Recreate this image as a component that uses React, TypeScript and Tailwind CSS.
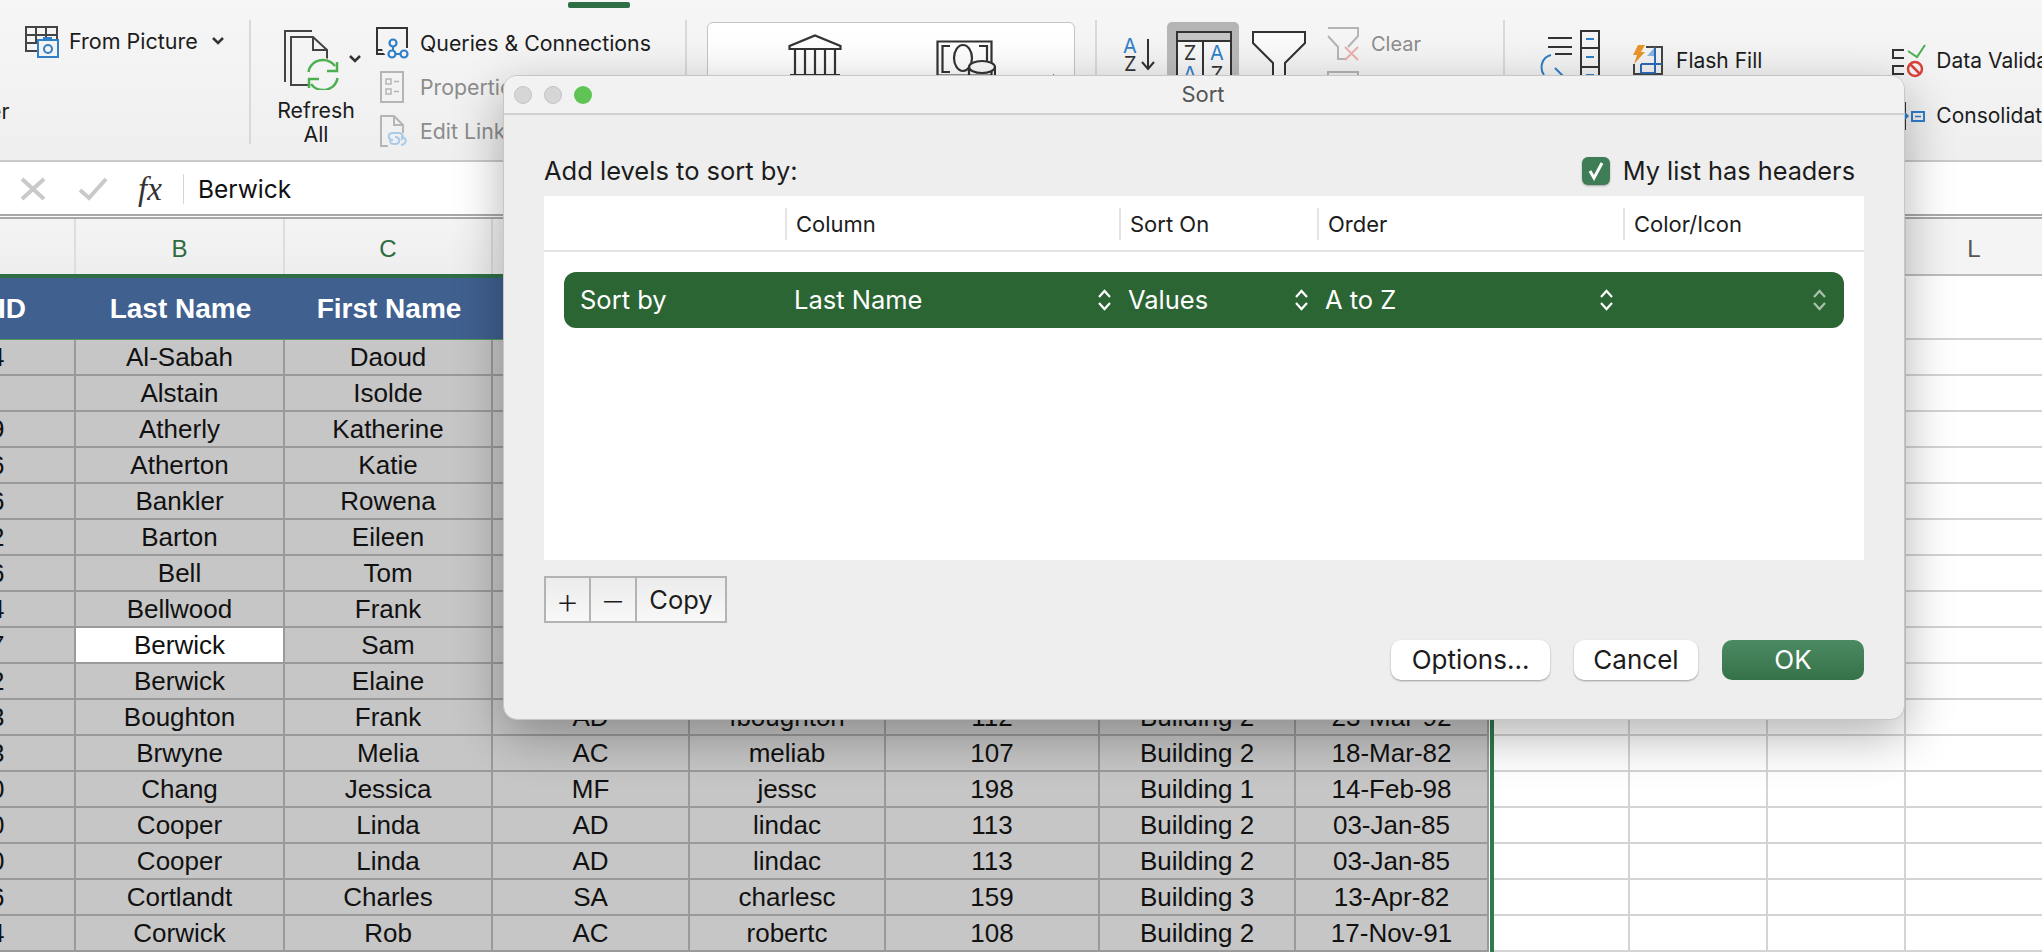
import React from 'react';

const rows: string[][] = [
  ['4', 'Al-Sabah', 'Daoud'],
  ['', 'Alstain', 'Isolde'],
  ['9', 'Atherly', 'Katherine'],
  ['6', 'Atherton', 'Katie'],
  ['6', 'Bankler', 'Rowena'],
  ['2', 'Barton', 'Eileen'],
  ['6', 'Bell', 'Tom'],
  ['4', 'Bellwood', 'Frank'],
  ['7', 'Berwick', 'Sam'],
  ['2', 'Berwick', 'Elaine'],
  ['3', 'Boughton', 'Frank', 'AD', 'fboughton', '112', 'Building 2', '23-Mar-92'],
  ['3', 'Brwyne', 'Melia', 'AC', 'meliab', '107', 'Building 2', '18-Mar-82'],
  ['0', 'Chang', 'Jessica', 'MF', 'jessc', '198', 'Building 1', '14-Feb-98'],
  ['0', 'Cooper', 'Linda', 'AD', 'lindac', '113', 'Building 2', '03-Jan-85'],
  ['0', 'Cooper', 'Linda', 'AD', 'lindac', '113', 'Building 2', '03-Jan-85'],
  ['6', 'Cortlandt', 'Charles', 'SA', 'charlesc', '159', 'Building 3', '13-Apr-82'],
  ['4', 'Corwick', 'Rob', 'AC', 'robertc', '108', 'Building 2', '17-Nov-91'],
];

function UpDown({ dim }: { dim?: boolean }) {
  return (
    <svg width="15" height="22" viewBox="0 0 15 22" fill="none" stroke={dim ? '#a9c2ae' : '#ffffff'} strokeWidth="2.2">
      <path d="M2 8l5.500-6 5.500 6M2 14l5.500 6 5.500-6" />
    </svg>
  );
}

function Chevron() {
  return (
    <svg width="14" height="10" viewBox="0 0 14 10" fill="none" stroke="#333" strokeWidth="2.500">
      <path d="M2 2l5 5 5-5" />
    </svg>
  );
}

function FromPictureIcon() {
  return (
    <svg width="34" height="32" viewBox="0 0 34 32" fill="none" className="shrink-0">
      <path d="M12 25H1V1h31v14M1 9h31M1 17h14M11 1v16M21 1v10" stroke="#444" strokeWidth="2" />
      <rect x="13" y="14" width="20" height="17" fill="#f3f3f3" stroke="#2f7fc9" strokeWidth="2" />
      <rect x="18" y="11" width="9" height="4" fill="#2f7fc9" />
      <circle cx="23" cy="23" r="4" stroke="#2f7fc9" strokeWidth="2" />
    </svg>
  );
}

function RefreshIcon() {
  return (
    <svg width="56" height="60" viewBox="0 0 56 60" fill="none" className="shrink-0">
      <path d="M28 1H1v51" stroke="#444" strokeWidth="2" />
      <path d="M24 55H7V7h22l14 13v10M29 7v13h14" stroke="#444" strokeWidth="2" />
      <circle cx="39" cy="45" r="17" fill="#f4f4f4" />
      <path d="M24.500 42c1-7 7-12 14.500-12 5 0 9 2 12 6M53.500 48c-1 7-7 12-14.500 12-5 0-9-2-12-6" stroke="#4caf50" strokeWidth="2.500" />
      <path d="M53 32v9h-10M25 58v-9h10" stroke="#4caf50" strokeWidth="2.500" />
    </svg>
  );
}

function QueriesIcon() {
  return (
    <svg width="33" height="32" viewBox="0 0 33 32" fill="none">
      <path d="M10 27H1V1h30v20" stroke="#333" strokeWidth="2" />
      <path d="M2 23h7" stroke="#333" strokeWidth="2" />
      <circle cx="17" cy="20" r="11" fill="#f4f4f4" />
      <path d="M17 18v8M17 27h11" stroke="#2f7fc9" strokeWidth="2" />
      <circle cx="17" cy="16" r="3.500" stroke="#2f7fc9" strokeWidth="2.200" fill="#f4f4f4" />
      <circle cx="16" cy="27" r="3.500" stroke="#2f7fc9" strokeWidth="2.200" fill="#f4f4f4" />
      <circle cx="28" cy="27" r="3.500" stroke="#2f7fc9" strokeWidth="2.200" fill="#f4f4f4" />
    </svg>
  );
}

function PropertiesIcon() {
  return (
    <svg width="24" height="32" viewBox="0 0 24 32" fill="none" stroke="#b5b5b5" strokeWidth="2">
      <rect x="1" y="1" width="22" height="30" />
      <path d="M6 8h5v5H6zM6 18h5v5H6zM14 10.500h5M14 20.500h5" strokeWidth="1.500" />
    </svg>
  );
}

function EditLinksIcon() {
  return (
    <svg width="28" height="33" viewBox="0 0 28 33" fill="none">
      <path d="M8 31H1V1h13l9 9v8M14 1v9h9" stroke="#b5b5b5" strokeWidth="2" />
      <path d="M13 25c-5 0-6-6-1-7h7c4 0 5 5 2 7M15 22c5 0 6 6 1 7h-2c-4 0-5-3-3-5M21 22c4 0 6 3 4 6-1 1-2 2-4 2" stroke="#a8cbe8" strokeWidth="2" />
    </svg>
  );
}

function BankIcon() {
  return (
    <svg width="54" height="42" viewBox="0 0 54 42" fill="none" stroke="#333" strokeWidth="2.200">
      <path d="M7 15v26M17 15v26M27 15v26M37 15v26M47 15v26" />
      <path d="M1.500 12v3h51v-3L27 1.500z" />
      <path d="M2 41h50" />
    </svg>
  );
}

function CurrencyIcon() {
  return (
    <svg width="60" height="42" viewBox="0 0 60 42" fill="none" stroke="#333" strokeWidth="2.200">
      <path d="M1.500 1.500h54v34H1.500z" />
      <path d="M14 6H6.500v26H14M43 6h8v20" />
      <ellipse cx="27" cy="18" rx="9" ry="13" />
      <ellipse cx="46" cy="27" rx="13" ry="6" fill="#fafafa" />
      <path d="M33 27v15M59 27v15M33 36c2 3 7 4 13 4s11-1 13-4" fill="#fafafa" />
    </svg>
  );
}

function AzIcon() {
  return (
    <svg width="34" height="34" viewBox="0 0 34 34" fill="none">
      <text x="0" y="15" fontSize="20" fontFamily="Inter, sans-serif" fill="#2f7fc9">A</text>
      <text x="1" y="33" fontSize="20" fontFamily="Inter, sans-serif" fill="#333">Z</text>
      <path d="M25 1v30M19 24l6 7 6-7" stroke="#333" strokeWidth="2" />
    </svg>
  );
}

function SortBoxIcon() {
  return (
    <svg width="56" height="60" viewBox="0 0 56 60" fill="none">
      <rect x="1" y="1" width="54" height="58" fill="#f6f6f6" stroke="#333" strokeWidth="2" />
      <rect x="2" y="2" width="52" height="8" fill="#c4c4c4" />
      <path d="M1 10h54M27 10v50" stroke="#333" strokeWidth="2" />
      <text x="14" y="29" textAnchor="middle" fontSize="20" fontFamily="Inter, sans-serif" fill="#333">Z</text>
      <text x="14" y="50" textAnchor="middle" fontSize="20" fontFamily="Inter, sans-serif" fill="#2f7fc9">A</text>
      <text x="41" y="29" textAnchor="middle" fontSize="20" fontFamily="Inter, sans-serif" fill="#2f7fc9">A</text>
      <text x="41" y="50" textAnchor="middle" fontSize="20" fontFamily="Inter, sans-serif" fill="#333">Z</text>
    </svg>
  );
}

function FunnelIcon() {
  return (
    <svg width="54" height="60" viewBox="0 0 54 60" fill="none">
      <path d="M1 1h52v11L33 32v28H21V32L1 12z" fill="#fafafa" stroke="#333" strokeWidth="2" />
    </svg>
  );
}

function ClearIcon() {
  return (
    <svg width="34" height="34" viewBox="0 0 34 34" fill="none">
      <path d="M1 1h30v8L21 20M1 9l10 11v12h8" stroke="#b5b5b5" strokeWidth="2" />
      <path d="M18 20l13 13M31 20L18 33" stroke="#eab0ac" strokeWidth="2" />
    </svg>
  );
}

function TextColumnsIcon() {
  return (
    <svg width="60" height="46" viewBox="0 0 60 46" fill="none">
      <path d="M8 8h24M8 17h24M15 24h17" stroke="#333" strokeWidth="2" />
      <path d="M11 25C2 27-1 38 4 45M15 38l8 8" stroke="#2f7fc9" strokeWidth="2" />
      <rect x="41" y="1" width="18" height="50" stroke="#333" strokeWidth="2" />
      <path d="M41 18h18M41 37h18" stroke="#333" strokeWidth="2" />
      <path d="M46 9h8M46 27h8M46 45h8" stroke="#2f7fc9" strokeWidth="2" />
    </svg>
  );
}

function FlashFillIcon() {
  return (
    <svg width="32" height="30" viewBox="0 0 32 30" fill="none" className="shrink-0 -mt-[2px]">
      <path d="M14 2h16v27H2V19" stroke="#444" strokeWidth="2" />
      <path d="M15 11L23 2v9z" fill="#8ab6e4" />
      <path d="M9 19h21M9 28h14M9 19v9M23 3v25" stroke="#2d6bb5" strokeWidth="2" />
      <path d="M6 0h7L9 7h4L2 19l3-9H1z" fill="#e8952b" />
    </svg>
  );
}

function DataValidationIcon() {
  return (
    <svg width="34" height="34" viewBox="0 0 34 34" fill="none" className="shrink-0">
      <path d="M12 6H1v8h11M12 22H1v8h11" stroke="#333" strokeWidth="2" />
      <path d="M16 7l9 6 8-12" stroke="#4caf50" strokeWidth="2" />
      <circle cx="23" cy="25" r="7" fill="#f4f4f4" stroke="#d9423b" strokeWidth="2.500" />
      <path d="M18 20l10 10" stroke="#d9423b" strokeWidth="2.500" />
    </svg>
  );
}

function ConsolidateIcon() {
  return (
    <svg width="30" height="30" viewBox="0 0 30 30" fill="none" className="shrink-0">
      <path d="M6 2h4v26H6" stroke="#333" strokeWidth="2" />
      <path d="M9 10l5 5-5 5z" fill="#2f7fc9" />
      <rect x="17" y="11" width="12" height="9" stroke="#2f7fc9" strokeWidth="2" />
      <path d="M20 15.500h6" stroke="#2f7fc9" strokeWidth="1.500" />
    </svg>
  );
}

function Divider({ className }: { className?: string }) {
  return <div className={`w-[2px] shrink-0 mt-[20px] bg-[#d9d9d9] ${className ?? 'h-[124px]'}`} />;
}

function Ribbon() {
  return (
    <div className="flex h-[162px] shrink-0 overflow-hidden border-b-2 border-[#c9c9c9] bg-gradient-to-b from-[#f6f6f6] to-[#efefef] text-[21.3px] leading-[24px] text-[#1c1c1c] whitespace-nowrap font-['Inter',sans-serif]">
      {/* Get data group */}
      <div className="w-[249px] shrink-0 pl-[25px] pt-[26px]">
        <div className="flex items-center">
          <FromPictureIcon />
          <span className="ml-[10px] -mt-[2px] text-[21.5px]">From Picture</span>
          <span className="ml-[13px] -mt-[2px]"><Chevron /></span>
        </div>
        <div className="-ml-[36px] mt-[41px]">er</div>
      </div>
      <Divider />

      {/* Queries group */}
      <div className="flex w-[434px] shrink-0 pl-[33px]">
        <div className="w-[92px] shrink-0 pt-[30px]">
          <div className="flex items-center">
            <RefreshIcon />
            <span className="ml-[8px] -mt-[2px]"><Chevron /></span>
          </div>
          <div className="-ml-[10px] mt-[8px] w-[84px] text-center">
            <div>Refresh</div>
            <div>All</div>
          </div>
        </div>
        <div className="pt-[21px]">
          <div className="flex h-[44px] items-center">
            <div className="w-[44px]"><QueriesIcon /></div>
            <span>Queries &amp; Connections</span>
          </div>
          <div className="flex h-[44px] items-center text-[#8c8c8c]">
            <div className="w-[44px] pl-[4px]"><PropertiesIcon /></div>
            <span className="-mt-[1px]">Properties</span>
          </div>
          <div className="flex h-[44px] items-center text-[#8c8c8c]">
            <div className="w-[44px] pl-[4px]"><EditLinksIcon /></div>
            <span>Edit Links</span>
          </div>
        </div>
      </div>
      <Divider />

      {/* Data types group */}
      <div className="w-[408px] shrink-0 pl-[20px] pt-[22px]">
        <div className="flex h-[110px] w-[368px] rounded-[6px] border border-[#c4c4c4] bg-gradient-to-b from-white to-[#fafafa] pl-[80px] pt-[11px]">
          <BankIcon />
          <div className="ml-[94px] mt-[6px]"><CurrencyIcon /></div>
          <div className="ml-[57px] mt-[40px] h-0 w-0 border-y-[4px] border-l-[6px] border-y-transparent border-l-[#333]" />
        </div>
      </div>
      <Divider />

      {/* Sort group */}
      <div className="flex w-[406px] shrink-0 items-start pl-[26px] pt-[22px]">
        <div className="mt-[16px]"><AzIcon /></div>
        <div className="ml-[10px] h-[70px] w-[72px] rounded-[5px] bg-gradient-to-b from-[#b4b4b4] to-[#c0c0c0] pl-[9px] pt-[9px]"><SortBoxIcon /></div>
        <div className="ml-[13px] mt-[9px]"><FunnelIcon /></div>
        <div className="ml-[21px] mt-[5px]">
          <div className="flex items-center text-[20px] text-[#8c8c8c]">
            <ClearIcon />
            <span className="ml-[10px]">Clear</span>
          </div>
          <div className="mt-[10px] h-[20px] w-[32px] border-2 border-[#b5b5b5]" />
        </div>
      </div>
      <Divider />

      {/* Data tools group */}
      <div className="flex pl-[35px] pt-[30px]">
        <TextColumnsIcon />
        <div className="ml-[32px] mt-[15px] flex h-[32px] items-center">
          <FlashFillIcon />
          <span className="ml-[12px] text-[21px]">Flash Fill</span>
        </div>
        <div className="ml-[130px] mt-[15px]">
          <div className="flex h-[32px] items-center">
            <DataValidationIcon />
            <span className="ml-[10px] text-[21px]">Data Validation</span>
          </div>
          <div className="mt-[23px] flex h-[32px] items-center pl-[3px]">
            <ConsolidateIcon />
            <span className="ml-[11px] text-[21px]">Consolidate</span>
          </div>
        </div>
      </div>
    </div>
  );
}

function FormulaBar() {
  return (
    <div className="flex h-[57px] shrink-0 items-start border-b-[5px] border-double border-[#a9a9a9] bg-white pt-[12px]">
      <svg width="26" height="24" viewBox="0 0 26 24" className="ml-[20px] mt-[3px] shrink-0" fill="none" stroke="#c9c9c9" strokeWidth="4">
        <path d="M2 2l22 20M24 2L2 22" />
      </svg>
      <svg width="30" height="24" viewBox="0 0 30 24" className="ml-[32px] mt-[3px] shrink-0" fill="none" stroke="#c9c9c9" strokeWidth="4">
        <path d="M2 13l9 8L28 2" />
      </svg>
      <span className="ml-[30px] w-[45px] font-['Liberation_Serif',serif] text-[33px] italic leading-[30px] text-[#333]">fx</span>
      <div className="h-[30px] w-[1px] bg-[#d5d5d5]" />
      <span className="ml-[14px] font-['Inter',sans-serif] text-[24.5px] leading-[30px] text-[#111]">Berwick</span>
    </div>
  );
}

const cellWidths = ['w-[76px]', 'w-[209px]', 'w-[208px]', 'w-[197px]', 'w-[196px]', 'w-[214px]', 'w-[196px]', 'w-[193px]'];
const blankWidths = ['w-[136px]', 'w-[138px]', 'w-[138px]', 'w-[138px]'];

function DataSheet() {
  return (
    <div className="flex min-h-0 flex-1 overflow-hidden font-['Liberation_Sans',Arial,sans-serif]">
      {/* Selected range */}
      <div className="w-[1494px] shrink-0">
        <div className="flex h-[55px] bg-gradient-to-b from-[#f4f4f4] to-[#eeeeee] text-[24px] text-[#2e6b3e]">
          {['', 'B', 'C'].map((c, i) => (
            <div key={i} className={`${cellWidths[i]} flex items-center justify-center border-r-2 border-[#dddddd] pt-[5px]`}>{c}</div>
          ))}
        </div>
        <div className="h-[4px] bg-[#2f6f46]" />
        <div className="border-r-4 border-[#2f7a4f] pr-[1px] bg-white">
          <div className="flex h-[61px] bg-[#40608f] text-[28px] font-bold text-white">
            <div className={`${cellWidths[0]} flex items-center overflow-hidden`}><span className="-ml-[2px]">ID</span></div>
            <div className={`${cellWidths[1]} flex items-center justify-center`}>Last Name</div>
            <div className={`${cellWidths[2]} flex items-center justify-center`}>First Name</div>
          </div>
          <div className="h-[1px] bg-[#4f9a5c]" />
          {rows.map((row, r) => (
            <div key={r} className="flex h-[36px] bg-[#c6c6c6] text-[26px] leading-[34px] text-[#111]">
              {cellWidths.map((w, c) => {
                const active = r === 8 && c === 1;
                return (
                  <div
                    key={c}
                    className={`${w} h-[36px] shrink-0 overflow-hidden whitespace-nowrap border-b-2 border-r-2 border-[#9a9a9a] ${c === 0 ? 'text-left' : 'text-center'} ${active ? 'bg-white' : ''}`}
                  >
                    {c === 0 ? <span className="-ml-[10px] inline-block">{row[0]}</span> : row[c]}
                  </div>
                );
              })}
            </div>
          ))}
        </div>
      </div>

      {/* Empty cells on the right */}
      <div className="flex-1">
        <div className="flex h-[57px] border-b-2 border-[#bdbdbd] bg-[#f4f4f4] text-[24px] text-[#555]">
          {['', '', '', 'L'].map((c, i) => (
            <div key={i} className={`${blankWidths[i]} flex shrink-0 items-center justify-center border-r-2 border-[#dddddd] pt-[5px]`}>{c}</div>
          ))}
        </div>
        <div className="flex h-[64px] bg-white pt-[2px]">
          {blankWidths.map((w, c) => (
            <div key={c} className={`${w} shrink-0 border-b-2 border-r-2 border-[#d4d4d4]`} />
          ))}
        </div>
        {rows.map((_, r) => (
          <div key={r} className="flex h-[36px] bg-white">
            {blankWidths.map((w, c) => (
              <div key={c} className={`${w} shrink-0 border-b-2 border-r-2 border-[#d4d4d4]`} />
            ))}
          </div>
        ))}
      </div>
    </div>
  );
}

function SortDialog() {
  return (
    <div className="absolute left-[503px] top-[75px] h-[645px] w-[1402px] overflow-hidden rounded-[14px] border border-[#c6c6c6] bg-[#eeeeee] font-['Inter',sans-serif] text-[#1c1c1c] shadow-[0_16px_50px_rgba(0,0,0,0.3)]">
      <div className="grid h-[39px] grid-cols-[1fr_auto_1fr] items-center border-b-2 border-[#d0d0d0] bg-[#f2f2f2] pl-[10px] pr-[12px]">
        <div className="flex gap-[12px]">
          <div className="h-[18px] w-[18px] rounded-full border border-[#c4c4c4] bg-[#d6d6d6]" />
          <div className="h-[18px] w-[18px] rounded-full border border-[#c4c4c4] bg-[#d6d6d6]" />
          <div className="h-[18px] w-[18px] rounded-full bg-[#5fc454]" />
        </div>
        <div className="text-[22px] text-[#555]">Sort</div>
        <div />
      </div>
      <div className="pl-[40px] pr-[40px] pt-[41px]">
        <div className="flex h-[30px] items-center justify-between">
          <span className="text-[25.500px]">Add levels to sort by:</span>
          <div className="mr-[9px] flex items-center">
            <div className="flex h-[28px] w-[28px] items-center justify-center rounded-[6px] bg-[#3f7d56] shadow-[0_1px_2px_rgba(0,0,0,0.3)]">
              <svg width="20" height="22" viewBox="0 0 20 22" fill="none" stroke="#ffffff" strokeWidth="3">
                <path d="M4 11l4 7 8-15" />
              </svg>
            </div>
            <span className="ml-[13px] text-[25.3px]">My list has headers</span>
          </div>
        </div>

        <div className="mt-[10px] h-[364px] bg-white">
          <div className="flex h-[56px] items-center border-b-2 border-[#e3e3e3] pt-[2px] text-[22px]">
            <div className="w-[241px]" />
            <div className="flex h-[32px] w-[334px] items-center border-l-2 border-[#e3e3e3] pl-[9px]">Column</div>
            <div className="flex h-[32px] w-[198px] items-center border-l-2 border-[#e3e3e3] pl-[9px]">Sort On</div>
            <div className="flex h-[32px] w-[306px] items-center border-l-2 border-[#e3e3e3] pl-[9px]">Order</div>
            <div className="flex h-[32px] items-center border-l-2 border-[#e3e3e3] pl-[9px]">Color/Icon</div>
          </div>
          <div className="ml-[20px] mr-[20px] mt-[20px] flex h-[56px] items-center gap-4 rounded-[12px] bg-[#2c6534] pl-[16px] text-[25.500px] text-white">
            <div className="w-[198px]">Sort by</div>
            <div className="flex w-[318px] items-center justify-between">Last Name<UpDown /></div>
            <div className="flex w-[181px] items-center justify-between">Values<UpDown /></div>
            <div className="flex w-[289px] items-center justify-between">A to Z<UpDown /></div>
            <div className="flex w-[197px] items-center justify-end"><UpDown dim /></div>
          </div>
        </div>

        <div className="mt-[16px] flex h-[47px] w-[183px] border-2 border-[#b3b3b3] bg-gradient-to-b from-[#ececec] to-[#f8f8f8] text-[25.500px]">
          <div className="flex w-[45px] items-center justify-center border-r-2 border-[#b3b3b3] text-[38px] font-extralight leading-none">+</div>
          <div className="flex w-[46px] items-center justify-center border-r-2 border-[#b3b3b3] text-[36px] font-extralight leading-none">–</div>
          <div className="flex flex-1 items-center justify-center pt-[1px]">Copy</div>
        </div>

        <div className="mt-[17px] flex justify-end gap-6 text-[26px]">
          <div className="flex h-[40px] w-[159px] items-center justify-center rounded-[10px] bg-white pb-[1px] shadow-[0_1px_2px_rgba(0,0,0,0.35)]">Options...</div>
          <div className="flex h-[40px] w-[124px] items-center justify-center rounded-[10px] bg-white pb-[1px] shadow-[0_1px_2px_rgba(0,0,0,0.35)]">Cancel</div>
          <div className="flex h-[40px] w-[142px] items-center justify-center rounded-[10px] bg-gradient-to-b from-[#4b8a63] to-[#367249] pb-[1px] text-white">OK</div>
        </div>
      </div>
    </div>
  );
}

export default function App() {
  return (
    <div className="relative flex h-[952px] w-[2042px] flex-col overflow-hidden bg-white">
      <Ribbon />
      <FormulaBar />
      <DataSheet />
      <div className="absolute left-[568px] top-[2px] h-[6px] w-[62px] rounded-[2px] bg-[#2f6f46]" />
      <SortDialog />
    </div>
  );
}
